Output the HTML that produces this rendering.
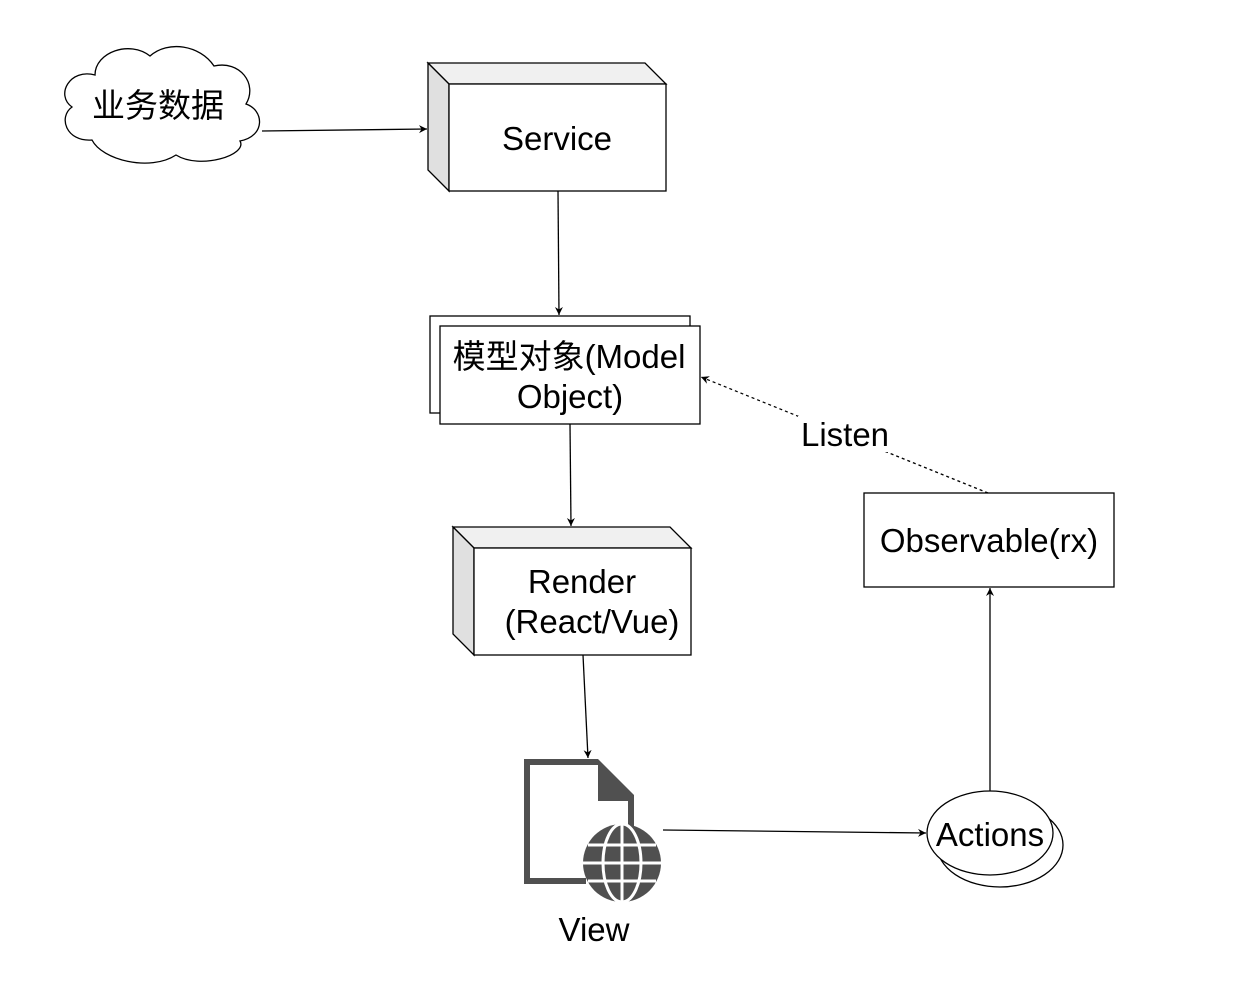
<!DOCTYPE html>
<html><head><meta charset="utf-8"><style>
html,body{margin:0;padding:0;background:#fff;width:1234px;height:993px;overflow:hidden}
svg text{font-family:"Liberation Sans","Noto Sans CJK SC",sans-serif;fill:#000}
</style></head><body>
<svg width="1234" height="993" viewBox="0 0 1234 993" xmlns="http://www.w3.org/2000/svg">
<defs>
<marker id="a" markerWidth="10" markerHeight="10" refX="8" refY="5" orient="auto" markerUnits="userSpaceOnUse">
<path d="M0,1 L8,5 L0,9 L2.5,5 Z" fill="#000"/>
</marker>
</defs>
<g stroke="#000" stroke-width="1.3" fill="none">
<path d="M95,75 C70,68 55,95 72,107 C58,117 66,142 92,140 C102,160 150,172 176,155 C200,170 248,155 240,141 C266,136 264,110 246,104 C258,84 240,60 214,66 C200,45 168,40 150,56 C130,40 95,52 95,75 Z" fill="#fff"/>
<polygon points="428,63 645,63 666,84 449,84" fill="#f0f0f0"/>
<polygon points="428,63 449,84 449,191 428,170" fill="#e0e0e0"/>
<rect x="449" y="84" width="217" height="107" fill="#fff"/>
<rect x="430" y="316" width="260" height="97" fill="#fff"/>
<rect x="440" y="326" width="260" height="98" fill="#fff"/>
<polygon points="453,527 670,527 691,548 474,548" fill="#f0f0f0"/>
<polygon points="453,527 474,548 474,655 453,634" fill="#e0e0e0"/>
<rect x="474" y="548" width="217" height="107" fill="#fff"/>
<rect x="864" y="493" width="250" height="94" fill="#fff"/>
<ellipse cx="1000" cy="845" rx="63" ry="42" fill="#fff"/>
<ellipse cx="990" cy="833" rx="63" ry="42" fill="#fff"/>
<line x1="262" y1="131" x2="427" y2="129" marker-end="url(#a)"/>
<line x1="558" y1="191" x2="559" y2="315" marker-end="url(#a)"/>
<line x1="570" y1="424" x2="571" y2="526" marker-end="url(#a)"/>
<line x1="583" y1="655" x2="588" y2="758" marker-end="url(#a)"/>
<line x1="663" y1="830" x2="926" y2="833" marker-end="url(#a)"/>
<line x1="990" y1="791" x2="990" y2="588" marker-end="url(#a)"/>
<line x1="988" y1="493" x2="701" y2="377" stroke-dasharray="3,3" marker-end="url(#a)"/>
</g>
<rect x="798" y="416" width="94" height="36" fill="#fff"/>
<g fill="#505050">
<path d="M524,759 L598,759 L634,795 L634,830 L628,830 L628,801 L598,801 L598,765 L530,765 L530,878 L586,878 L586,884 L524,884 Z"/>
<circle cx="622" cy="863" r="39"/>
</g>
<g stroke="#fff" stroke-width="3" fill="none">
<line x1="583" y1="863" x2="661" y2="863"/>
<line x1="588" y1="845" x2="656" y2="845"/>
<line x1="588" y1="881" x2="656" y2="881"/>
<line x1="622" y1="824" x2="622" y2="902"/>
<ellipse cx="622" cy="863" rx="19" ry="39"/>
</g>
<text x="158" y="117" font-size="33" text-anchor="middle">业务数据</text>
<text x="557" y="150" font-size="33" text-anchor="middle">Service</text>
<text x="569" y="368" font-size="33" text-anchor="middle">模型对象(Model</text>
<text x="570" y="408" font-size="33" text-anchor="middle">Object)</text>
<text x="582" y="593" font-size="33" text-anchor="middle">Render</text>
<text x="592" y="633" font-size="33" text-anchor="middle">(React/Vue)</text>
<text x="989" y="552" font-size="33" text-anchor="middle">Observable(rx)</text>
<text x="845" y="446" font-size="33" text-anchor="middle">Listen</text>
<text x="990" y="846" font-size="33" text-anchor="middle">Actions</text>
<text x="594" y="941" font-size="33" text-anchor="middle">View</text>
</svg>
</body></html>
